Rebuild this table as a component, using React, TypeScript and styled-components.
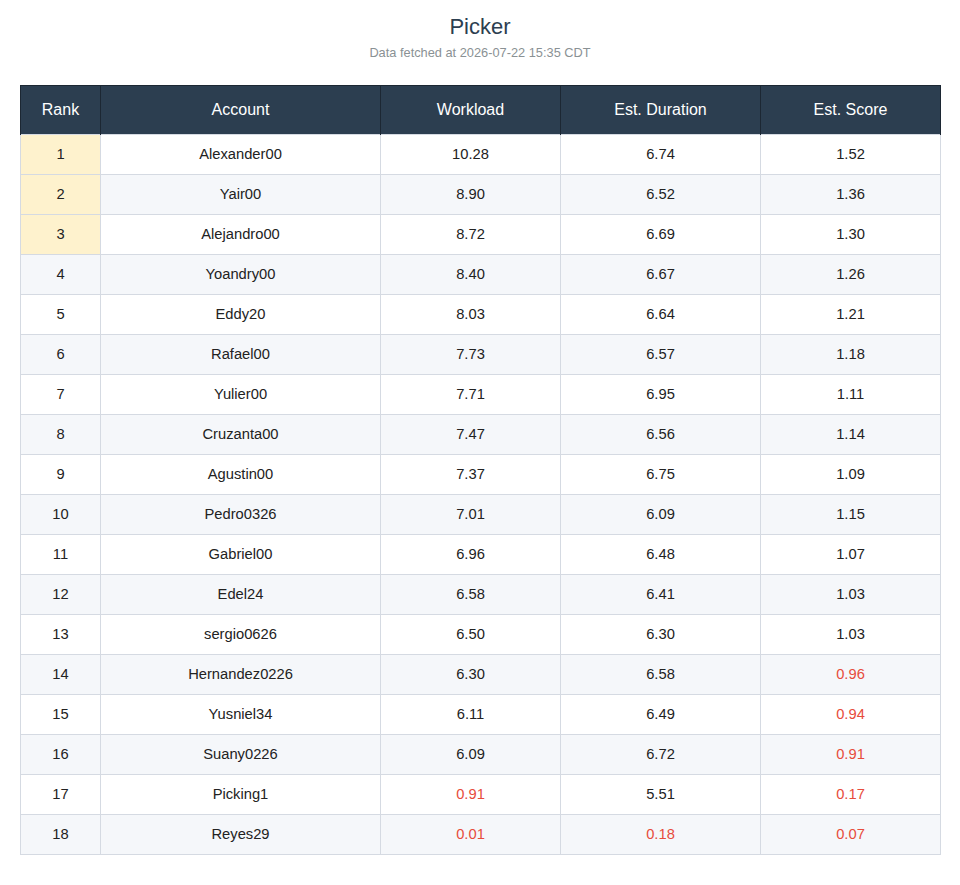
import React from 'react'
import styled, { createGlobalStyle } from 'styled-components'

//Global
const GlobalStyle = createGlobalStyle`
  body {
    margin: 0;
    background: #ffffff;
    font-family: 'Liberation Sans', Arial, sans-serif;
    color: #222222;
  }
`

//Styled Components
const Page = styled.div`
  padding: 13px 20px 20px;
`

const Title = styled.h1`
  margin: 0;
  text-align: center;
  font-size: 22px;
  line-height: 28px;
  font-weight: normal;
  color: #2c3e50;
`

const Subtitle = styled.p`
  margin: 4px 0 0;
  text-align: center;
  font-size: 12.8px;
  line-height: 16px;
  color: #8a9194;
`

const Table = styled.table`
  margin-top: 24px;
  width: 100%;
  border-collapse: collapse;
  table-layout: fixed;
  font-size: 14.72px;
`

const HeadCell = styled.th`
  height: 48px;
  padding: 0;
  background: #2c3e50;
  color: #ffffff;
  font-size: 16px;
  font-weight: normal;
  border: 1px solid #1c2733;
  border-bottom: none;
  text-align: center;
`

const Row = styled.tr<{ $alt: boolean }>`
  background: ${(props) => (props.$alt ? '#f5f7fa' : '#ffffff')};
`

const Cell = styled.td<{ $low?: boolean; $top?: boolean }>`
  height: 38px;
  padding: 0 0 1px;
  text-align: center;
  border: 1px solid #d5dae2;
  color: ${(props) => (props.$low ? '#e74c3c' : '#222222')};
  background: ${(props) => (props.$top ? '#fef2cd' : 'transparent')};
`

//Data
interface IRow {
  account: string
  workload: number
  duration: number
  score: number
}

const rows: IRow[] = [
  { account: 'Alexander00', workload: 10.28, duration: 6.74, score: 1.52 },
  { account: 'Yair00', workload: 8.9, duration: 6.52, score: 1.36 },
  { account: 'Alejandro00', workload: 8.72, duration: 6.69, score: 1.3 },
  { account: 'Yoandry00', workload: 8.4, duration: 6.67, score: 1.26 },
  { account: 'Eddy20', workload: 8.03, duration: 6.64, score: 1.21 },
  { account: 'Rafael00', workload: 7.73, duration: 6.57, score: 1.18 },
  { account: 'Yulier00', workload: 7.71, duration: 6.95, score: 1.11 },
  { account: 'Cruzanta00', workload: 7.47, duration: 6.56, score: 1.14 },
  { account: 'Agustin00', workload: 7.37, duration: 6.75, score: 1.09 },
  { account: 'Pedro0326', workload: 7.01, duration: 6.09, score: 1.15 },
  { account: 'Gabriel00', workload: 6.96, duration: 6.48, score: 1.07 },
  { account: 'Edel24', workload: 6.58, duration: 6.41, score: 1.03 },
  { account: 'sergio0626', workload: 6.5, duration: 6.3, score: 1.03 },
  { account: 'Hernandez0226', workload: 6.3, duration: 6.58, score: 0.96 },
  { account: 'Yusniel34', workload: 6.11, duration: 6.49, score: 0.94 },
  { account: 'Suany0226', workload: 6.09, duration: 6.72, score: 0.91 },
  { account: 'Picking1', workload: 0.91, duration: 5.51, score: 0.17 },
  { account: 'Reyes29', workload: 0.01, duration: 0.18, score: 0.07 },
]

const fmt = (n: number) => n.toFixed(2)

//React Component
const App: React.FC = () => {
  return (
    <Page>
      <GlobalStyle />
      <Title>Picker</Title>
      <Subtitle>Data fetched at 2026-07-22 15:35 CDT</Subtitle>
      <Table>
        <colgroup>
          <col style={{ width: 80 }} />
          <col style={{ width: 280 }} />
          <col style={{ width: 180 }} />
          <col style={{ width: 200 }} />
          <col style={{ width: 180 }} />
        </colgroup>
        <thead>
          <tr>
            <HeadCell>Rank</HeadCell>
            <HeadCell>Account</HeadCell>
            <HeadCell>Workload</HeadCell>
            <HeadCell>Est. Duration</HeadCell>
            <HeadCell>Est. Score</HeadCell>
          </tr>
        </thead>
        <tbody>
          {rows.map((r, i) => (
            <Row key={r.account} $alt={i % 2 === 1}>
              <Cell $top={i < 3}>{i + 1}</Cell>
              <Cell>{r.account}</Cell>
              <Cell $low={r.workload < 1}>{fmt(r.workload)}</Cell>
              <Cell $low={r.duration < 1}>{fmt(r.duration)}</Cell>
              <Cell $low={r.score < 1}>{fmt(r.score)}</Cell>
            </Row>
          ))}
        </tbody>
      </Table>
    </Page>
  )
}
export default App
